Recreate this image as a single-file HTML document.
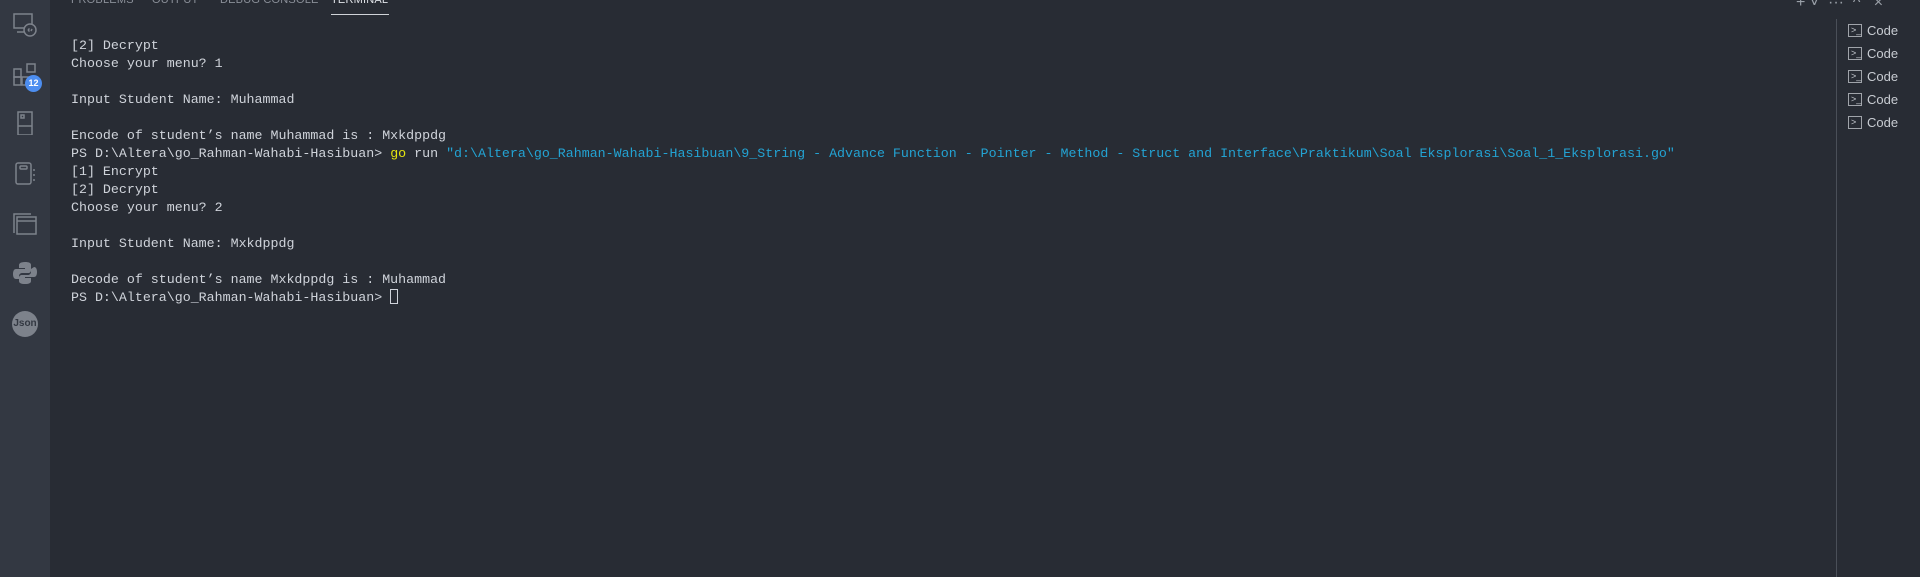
<!DOCTYPE html>
<html><head><meta charset="utf-8"><style>
*{margin:0;padding:0;box-sizing:border-box}
body{width:1920px;height:577px;background:#282c34;overflow:hidden;position:relative;font-family:"Liberation Mono",monospace}
#side{position:absolute;left:0;top:0;width:50px;height:577px;background:#333842}
.ic{position:absolute;left:13px;width:24px;height:24px}
#tabs{position:absolute;top:-6px;left:71px;font:11px "Liberation Sans",sans-serif;color:#8a8f98;letter-spacing:.2px}
#tabs span{position:absolute;white-space:nowrap}
#term{position:absolute;left:71px;top:37px;font-size:13.3px;line-height:18px;color:#cfd3da;white-space:pre}
.y{color:#e5e510}.c{color:#23a3d3}
#sep{position:absolute;left:1836px;top:19px;width:1px;height:558px;background:#4a4f58}
.it{position:absolute;left:1848px;font:13px "Liberation Sans",sans-serif;color:#c8ccd2;display:flex;align-items:center;gap:5px}
.it i{display:inline-block;width:14px;height:13px;border:1px solid #a0a4aa;font-style:normal;font-size:9px;line-height:10px;color:#c8ccd2;padding-left:2px}
</style></head><body>
<div id="side">
<svg class="ic" style="top:13px" viewBox="0 0 24 24" fill="none" stroke="#7d828b" stroke-width="1.5"><rect x="1" y="1" width="18" height="14"/><path d="M4 19h8"/><circle cx="17" cy="17" r="6" fill="#333842"/><path d="M15 17l1.5-1.5M15 17l1.5 1.5M19 16l-1 2"/></svg>
<svg class="ic" style="top:63px" viewBox="0 0 24 24" fill="none" stroke="#7d828b" stroke-width="1.5"><rect x="1" y="6" width="7" height="8"/><rect x="1" y="14" width="7" height="8"/><rect x="9" y="14" width="6" height="8"/><rect x="14" y="1" width="8" height="8"/></svg>
<div style="position:absolute;left:25px;top:75px;width:17px;height:17px;border-radius:50%;background:#4d8ef0;color:#fff;font:bold 9px 'Liberation Sans',sans-serif;text-align:center;line-height:17px">12</div>
<svg class="ic" style="top:111px" viewBox="0 0 24 24" fill="none" stroke="#7d828b" stroke-width="1.5"><rect x="5" y="1" width="14" height="23"/><path d="M5 15h14"/><rect x="8" y="4" width="3" height="3"/></svg>
<svg class="ic" style="top:161px" viewBox="0 0 24 24" fill="none" stroke="#7d828b" stroke-width="1.5"><rect x="3" y="2" width="15" height="21" rx="2"/><rect x="7" y="5" width="7" height="3" rx="1"/><path d="M21 8v2M21 13v2M21 18v2"/></svg>
<svg class="ic" style="top:211px" viewBox="0 0 24 24" fill="none" stroke="#7d828b" stroke-width="1.5"><path d="M1 22V3h17"/><rect x="4" y="6" width="19" height="17"/><path d="M4 10h19"/></svg>
<svg class="ic" style="top:261px" viewBox="0 0 24 24" fill="#7d828b"><path d="M12 1c-5 0-6 2-6 3v3h6v1H3c-2 0-3 2-3 5s1 5 3 5h3v-3c0-2 2-3 3-3h6c2 0 3-1 3-3V4c0-2-2-3-6-3zm6 7v3c0 2-2 3-3 3H9c-2 0-3 1-3 3v3c0 2 2 3 6 3s6-1 6-3v-3h-6v-1h9c2 0 3-2 3-5s-1-5-3-5z"/></svg>
<div style="position:absolute;left:12px;top:311px;width:26px;height:26px;border-radius:50%;background:#7d828b;color:#333842;font:bold 10px 'Liberation Sans',sans-serif;text-align:center;line-height:26px">Json</div>
</div>
<div id="tabs"><span style="left:0">PROBLEMS</span><span style="left:81px">OUTPUT</span><span style="left:149px">DEBUG CONSOLE</span><span style="left:260px;color:#e0e3e8">TERMINAL</span></div>
<div style="position:absolute;left:331px;top:14px;width:58px;height:1px;background:#d0d3d8"></div>
<div id="term">[2] Decrypt
Choose your menu? 1

Input Student Name: Muhammad

Encode of student’s name Muhammad is : Mxkdppdg
PS D:\Altera\go_Rahman-Wahabi-Hasibuan&gt; <span class="y">go</span> run <span class="c">"d:\Altera\go_Rahman-Wahabi-Hasibuan\9_String - Advance Function - Pointer - Method - Struct and Interface\Praktikum\Soal Eksplorasi\Soal_1_Eksplorasi.go"</span>
[1] Encrypt
[2] Decrypt
Choose your menu? 2

Input Student Name: Mxkdppdg

Decode of student’s name Mxkdppdg is : Muhammad
PS D:\Altera\go_Rahman-Wahabi-Hasibuan&gt; <span style="display:inline-block;width:8px;height:15px;border:1px solid #cfd3da;vertical-align:-3px"></span></div>
<div style="position:absolute;left:1796px;top:-6px;font:16px 'Liberation Sans',sans-serif;color:#9aa0a8;white-space:pre">+ ˅  ···  ^   ×</div>
<div id="sep"></div>
<div class="it" style="top:23px"><i>&gt;_</i>Code</div>
<div class="it" style="top:46px"><i>&gt;_</i>Code</div>
<div class="it" style="top:69px"><i>&gt;_</i>Code</div>
<div class="it" style="top:92px"><i>&gt;_</i>Code</div>
<div class="it" style="top:115px"><i>&gt;</i>Code</div>
</body></html>
